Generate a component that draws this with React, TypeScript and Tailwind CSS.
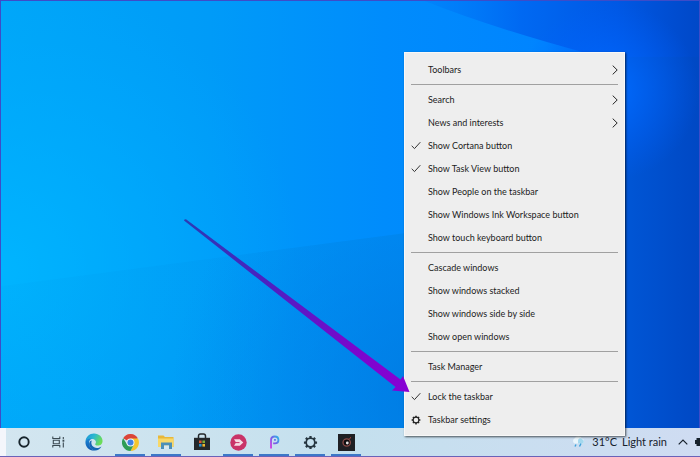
import type { ReactNode } from "react";

type Entry = {
  label: string;
  checked?: boolean;
  submenu?: boolean;
  gear?: boolean;
};

const groups: Entry[][] = [
  [{ label: "Toolbars", submenu: true }],
  [
    { label: "Search", submenu: true },
    { label: "News and interests", submenu: true },
    { label: "Show Cortana button", checked: true },
    { label: "Show Task View button", checked: true },
    { label: "Show People on the taskbar" },
    { label: "Show Windows Ink Workspace button" },
    { label: "Show touch keyboard button" },
  ],
  [
    { label: "Cascade windows" },
    { label: "Show windows stacked" },
    { label: "Show windows side by side" },
    { label: "Show open windows" },
  ],
  [{ label: "Task Manager" }],
  [
    { label: "Lock the taskbar", checked: true },
    { label: "Taskbar settings", gear: true },
  ],
];

function Gear({ className }: { className: string }) {
  return (
    <svg viewBox="0 0 16 16" className={className} fill="none" stroke="currentColor" aria-hidden="true">
      <circle cx="8" cy="8" r="4.6" strokeWidth="1.8" />
      <g strokeWidth="2.4">
        <path d="M8 1v2.6M8 12.4V15M1 8h2.6M12.4 8H15" />
        <path d="M3.05 3.05l1.9 1.9M11.05 11.05l1.9 1.9M3.05 12.95l1.9-1.9M11.05 4.95l1.9-1.9" />
      </g>
    </svg>
  );
}

function Wallpaper() {
  return (
    <svg
      viewBox="0 0 700 428"
      preserveAspectRatio="none"
      className="absolute inset-0 h-full w-full"
      aria-hidden="true"
    >
      <defs>
        <linearGradient id="sky" x1="0" y1="0" x2="1" y2="0">
          <stop offset="0" stopColor="#00a6f8" />
          <stop offset="0.3" stopColor="#009bf8" />
          <stop offset="0.55" stopColor="#008cfc" />
          <stop offset="0.78" stopColor="#0084ff" />
          <stop offset="0.9" stopColor="#0060f0" />
          <stop offset="1" stopColor="#004cd0" />
        </linearGradient>
        <radialGradient id="cyan" cx="0" cy="270" r="300" gradientUnits="userSpaceOnUse">
          <stop offset="0" stopColor="#00b6ff" stopOpacity="0.9" />
          <stop offset="1" stopColor="#00acff" stopOpacity="0" />
        </radialGradient>
        <radialGradient id="glow" cx="610" cy="90" r="90" gradientUnits="userSpaceOnUse">
          <stop offset="0" stopColor="#006cff" stopOpacity="0.95" />
          <stop offset="1" stopColor="#0060ff" stopOpacity="0" />
        </radialGradient>
        <radialGradient id="dusk" cx="450" cy="400" r="280" gradientUnits="userSpaceOnUse">
          <stop offset="0" stopColor="#0074d8" stopOpacity="0.7" />
          <stop offset="1" stopColor="#0080e0" stopOpacity="0" />
        </radialGradient>
        <linearGradient id="wedge" x1="0" y1="0" x2="1" y2="0">
          <stop offset="0" stopColor="#0098e8" stopOpacity="0.08" />
          <stop offset="1" stopColor="#0088e8" stopOpacity="0.3" />
        </linearGradient>
        <linearGradient id="beam" x1="0" y1="0" x2="1" y2="0">
          <stop offset="0" stopColor="#007cf8" stopOpacity="0.4" />
          <stop offset="0.35" stopColor="#0064f0" stopOpacity="0.85" />
          <stop offset="0.7" stopColor="#0058e4" />
          <stop offset="1" stopColor="#0048c8" />
        </linearGradient>
        <linearGradient id="side" x1="0" y1="0" x2="1" y2="0">
          <stop offset="0" stopColor="#0058d8" />
          <stop offset="1" stopColor="#0048c4" />
        </linearGradient>
      </defs>
      <rect width="700" height="428" fill="url(#sky)" />
      <rect width="700" height="428" fill="url(#cyan)" />
      <path d="M0 286 410 232V428H0z" fill="url(#wedge)" />
      <path d="M0 286 410 232V428H0z" fill="url(#dusk)" />
      <path d="M425 0Q490 26 590 53L700 90V0z" fill="url(#beam)" />
      <rect x="615" y="56" width="85" height="372" fill="url(#side)" />
      <rect x="500" width="200" height="200" fill="url(#glow)" />
    </svg>
  );
}

function ContextMenu() {
  return (
    <div className="absolute right-[75px] bottom-[21px] z-10">
      <div
        role="menu"
        aria-label="Taskbar"
        className="w-[221px] border border-[#f8f8f8] bg-[#eeeeee] px-[6px] pt-[5px] pb-[4px] shadow-[1px_1px_2px_rgba(0,0,0,0.65)]"
      >
        {groups.map((group, index) => (
          <div key={group[0].label} role="group">
            {index > 0 && <hr className="my-[3px] border-t border-[#a0a0a0]" />}
            {group.map((entry) => (
              <button
                key={entry.label}
                type="button"
                role={entry.checked ? "menuitemcheckbox" : "menuitem"}
                aria-checked={entry.checked}
                className="flex h-[23px] w-full items-center text-left text-[9px] leading-[12px] text-[#1c1c1c]"
              >
                <span className="flex w-[17px] shrink-0 items-center">
                  {entry.checked && (
                    <svg viewBox="0 0 10 9" className="h-[9px] w-[10px]" fill="none" stroke="#333" aria-hidden="true">
                      <path d="M.7 4.8 3.5 7.6 9.3 1.2" />
                    </svg>
                  )}
                  {entry.gear && <Gear className="h-[10px] w-[10px] text-[#222]" />}
                </span>
                <span className="grow whitespace-nowrap">{entry.label}</span>
                {entry.submenu && (
                  <svg viewBox="0 0 6 10" className="h-[10px] w-[6px]" fill="none" stroke="#222" aria-hidden="true">
                    <path d="M.7.6 5.2 5 .7 9.4" />
                  </svg>
                )}
              </button>
            ))}
          </div>
        ))}
      </div>
      <svg
        viewBox="0 0 226 173"
        className="pointer-events-none absolute right-[215px] bottom-[44px] h-[173px] w-[226px]"
        aria-hidden="true"
      >
        <defs>
          <linearGradient id="arrow" x1="0" y1="0" x2="1" y2="1">
            <stop offset="0" stopColor="#2a3bb4" />
            <stop offset="0.35" stopColor="#4a22c0" />
            <stop offset="0.75" stopColor="#7a08cc" />
            <stop offset="1" stopColor="#8800d4" />
          </linearGradient>
        </defs>
        <path d="M.5.5 2 .3 216.500 160.500 219 157 225.500 173 208 171.500 211.500 168 0 1.500z" fill="url(#arrow)" />
      </svg>
    </div>
  );
}

function TaskButton({ label, running, narrow, children }: { label: string; running?: boolean; narrow?: boolean; children: ReactNode }) {
  return (
    <button
      type="button"
      aria-label={label}
      className={`relative flex h-full shrink-0 items-center justify-center ${narrow ? "w-[35px]" : "w-[36px]"}`}
    >
      {children}
      {running && <span className="absolute inset-x-[3px] bottom-0 h-[2px] bg-[#3c78c8]" />}
    </button>
  );
}

function Taskbar() {
  return (
    <footer className="relative flex h-[29px] shrink-0 items-stretch border-b border-[#6a62b8] bg-linear-to-r from-[#d3e6f0] via-[#c4e0ee] to-[#cfdcf2]">
      <span className="w-[6px] shrink-0 bg-[#f4f6fb]" />
      <TaskButton label="Cortana" narrow>
        <svg viewBox="0 0 12 12" className="size-[12px]" fill="none" stroke="#17242c" strokeWidth="1.900">
          <circle cx="6" cy="6" r="4.700" />
        </svg>
      </TaskButton>
      <TaskButton label="Task View" narrow>
        <svg viewBox="0 0 13 12" className="h-[12px] w-[13px]" fill="none" stroke="#3b4a52" strokeWidth="1.100">
          <path d="M.8.5v2h7v-2M.8 11.500v-2h7v2M1.300 4.300h6v3.500h-6zM11.300 1v2M11.300 6.500v5" />
          <path d="M10.500 4.700h1.800" strokeWidth="2" />
        </svg>
      </TaskButton>
      <TaskButton label="Microsoft Edge">
        <svg viewBox="0 0 24 24" className="size-[18px]">
          <defs>
            <linearGradient id="edgeTop" x1="0" y1="0" x2="1" y2="0.4">
              <stop offset="0" stopColor="#1b8fd8" />
              <stop offset="0.5" stopColor="#2bb8d0" />
              <stop offset="1" stopColor="#6bdd58" />
            </linearGradient>
            <linearGradient id="edgeLow" x1="0" y1="0" x2="0" y2="1">
              <stop offset="0" stopColor="#1b86d4" />
              <stop offset="1" stopColor="#1058b0" />
            </linearGradient>
          </defs>
          <path d="M.6 11.500C1 5 6 .6 12 .6c7 0 11.400 5 11.400 10 0 4-3 6.200-6.200 6.200-2.700 0-4.200-1.200-3.500-2.200 2.500-3-.2-6.600-4.200-6.600C5 8 1.500 9.500.6 11.500z" fill="url(#edgeTop)" />
          <path d="M.6 11.500C1.500 8.800 5 7 9 7.500c-3 1.400-4 4.200-3.600 7C6 19.500 10 23 14 23.200 6.500 24.500.2 19 .6 11.500z" fill="url(#edgeLow)" />
          <path d="M9 10c-2 5 1.500 10 7 10 2.500 0 4.500-.8 6-2-2 3.500-5 5.200-8.500 5.200C8.500 22.700 5 18.500 5.500 14 6 11.500 7.500 10.200 9 10z" fill="#1467b4" />
        </svg>
      </TaskButton>
      <TaskButton label="Google Chrome" running>
        <svg viewBox="0 0 24 24" className="size-[17px]">
          <path d="M12 12 1.600 6A12 12 0 0 1 22.400 6z" fill="#db4538" />
          <path d="M12 6.500h10.600A12 12 0 0 1 12 24l4.800-9.200z" fill="#f4c52c" />
          <path d="M1.600 6 7.200 14.800 16.800 14.800 12 24A12 12 0 0 1 1.600 6z" fill="#2f9d55" />
          <circle cx="12" cy="12" r="5.600" fill="#f3f6f8" />
          <circle cx="12" cy="12" r="4.300" fill="#4082e0" />
        </svg>
      </TaskButton>
      <TaskButton label="File Explorer" running>
        <svg viewBox="0 0 18 16" className="h-[16px] w-[18px]">
          <path d="M1 1.500h5.500L8 3h8.500v10H1z" fill="#e8b83a" />
          <path d="M1 4.500h15.500V13H1z" fill="#f8d868" />
          <path d="M4 8.500h11V15H12v-3.500H7V15H4z" fill="#4c8fb8" />
          <path d="M7 11.500H12V15H7z" fill="#d6e7f0" />
        </svg>
      </TaskButton>
      <TaskButton label="Microsoft Store">
        <svg viewBox="0 0 18 18" className="size-[18px]">
          <path d="M5.500 5.500V3.200Q5.500 1 7.500 1h3q2 0 2 2.200v2.300" fill="none" stroke="#24282b" strokeWidth="1.500" />
          <path d="M1 4.800h16V17H1z" fill="#24282b" />
          <path d="M6 7.500h2.600v2.600H6z" fill="#d95732" />
          <path d="M9.400 7.500H12v2.600H9.400z" fill="#7eaa35" />
          <path d="M6 11h2.600v2.600H6z" fill="#2c91c8" />
          <path d="M9.400 11H12v2.600H9.400z" fill="#efb52e" />
        </svg>
      </TaskButton>
      <TaskButton label="Screen capture" running>
        <svg viewBox="0 0 17 17" className="size-[17px]">
          <circle cx="8.500" cy="8.500" r="8.200" fill="#c93468" />
          <path d="M4 5.300h5.800L13.300 8.500l-3.500 3.300H4L6 8.500z" fill="#f6dbe4" />
          <path d="M3.500 8.600h6" stroke="#c93468" strokeWidth="1" />
        </svg>
      </TaskButton>
      <TaskButton label="PicsArt" running>
        <svg viewBox="0 0 12 15" className="h-[14px] w-[11px]" fill="none">
          <defs>
            <linearGradient id="pics" x1="0" y1="1" x2="1" y2="0">
              <stop offset="0" stopColor="#d63be0" />
              <stop offset="0.5" stopColor="#7a5de8" />
              <stop offset="1" stopColor="#28b8e8" />
            </linearGradient>
          </defs>
          <path d="M2.200 14.500V5.500Q2.200 1.500 6.300 1.500 10.300 1.500 10.300 5.300 10.300 9 6.500 9H4.500M5.500 5.200h2" stroke="url(#pics)" strokeWidth="2" />
        </svg>
      </TaskButton>
      <TaskButton label="Settings" running>
        <Gear className="size-[15px] text-[#263640]" />
      </TaskButton>
      <TaskButton label="Camera" running>
        <svg viewBox="0 0 17 17" className="size-[17px]">
          <path d="M0 0h17v17H0z" fill="#1f2024" />
          <circle cx="8.700" cy="8.500" r="3.700" fill="#0c0c0e" stroke="#8b4c48" strokeWidth="1.300" />
          <circle cx="9.300" cy="9" r="1.400" fill="#e8e4e4" />
          <path d="M11.500 4.500l1.500-1" stroke="#c84840" />
        </svg>
      </TaskButton>
      <div className="ml-auto flex items-center text-[#16212c]">
        <button type="button" className="flex items-center gap-[6px] whitespace-nowrap text-[11px] leading-[16px]">
          <svg viewBox="0 0 15 12" className="h-[12px] w-[15px]" aria-hidden="true">
            <path d="M3.500 7.500a3 3 0 0 1 .3-5.300A4 4 0 0 1 11 2.500a2.700 2.700 0 0 1 .5 5z" fill="#eaf6fc" />
            <path d="M7 4.500a2.400 2.400 0 0 1 4.500-1 2.200 2.200 0 0 1 0 4H7z" fill="#a4d8ee" />
            <path d="M5 8.500 4 10.500M10 7.500 8.500 10.500" stroke="#3aa0dc" strokeWidth="1.400" />
          </svg>
          <span className="flex gap-[5px]">
            <span>31°C</span>
            <span>Light rain</span>
          </span>
        </button>
        <button type="button" aria-label="Show hidden icons" className="ml-[11px] flex">
          <svg viewBox="0 0 10 6" className="h-[6px] w-[10px]" fill="none" stroke="currentColor" strokeWidth="1.200">
            <path d="M.7 5.300 5 1 9.300 5.300" />
          </svg>
        </button>
        <button type="button" aria-label="Battery" className="ml-[7px] flex">
          <svg viewBox="0 0 5 8" className="h-[8px] w-[5px]">
            <path d="M0 2h1.500V0H5v8H1.500V6H0z" fill="currentColor" />
          </svg>
        </button>
      </div>
    </footer>
  );
}

export default function App() {
  return (
    <div className="relative flex h-screen w-full flex-col overflow-hidden font-[Lato,'Noto_Sans',sans-serif]">
      <main className="relative grow border-x border-t border-[#3d4cc8]">
        <Wallpaper />
      </main>
      <Taskbar />
      <ContextMenu />
    </div>
  );
}
